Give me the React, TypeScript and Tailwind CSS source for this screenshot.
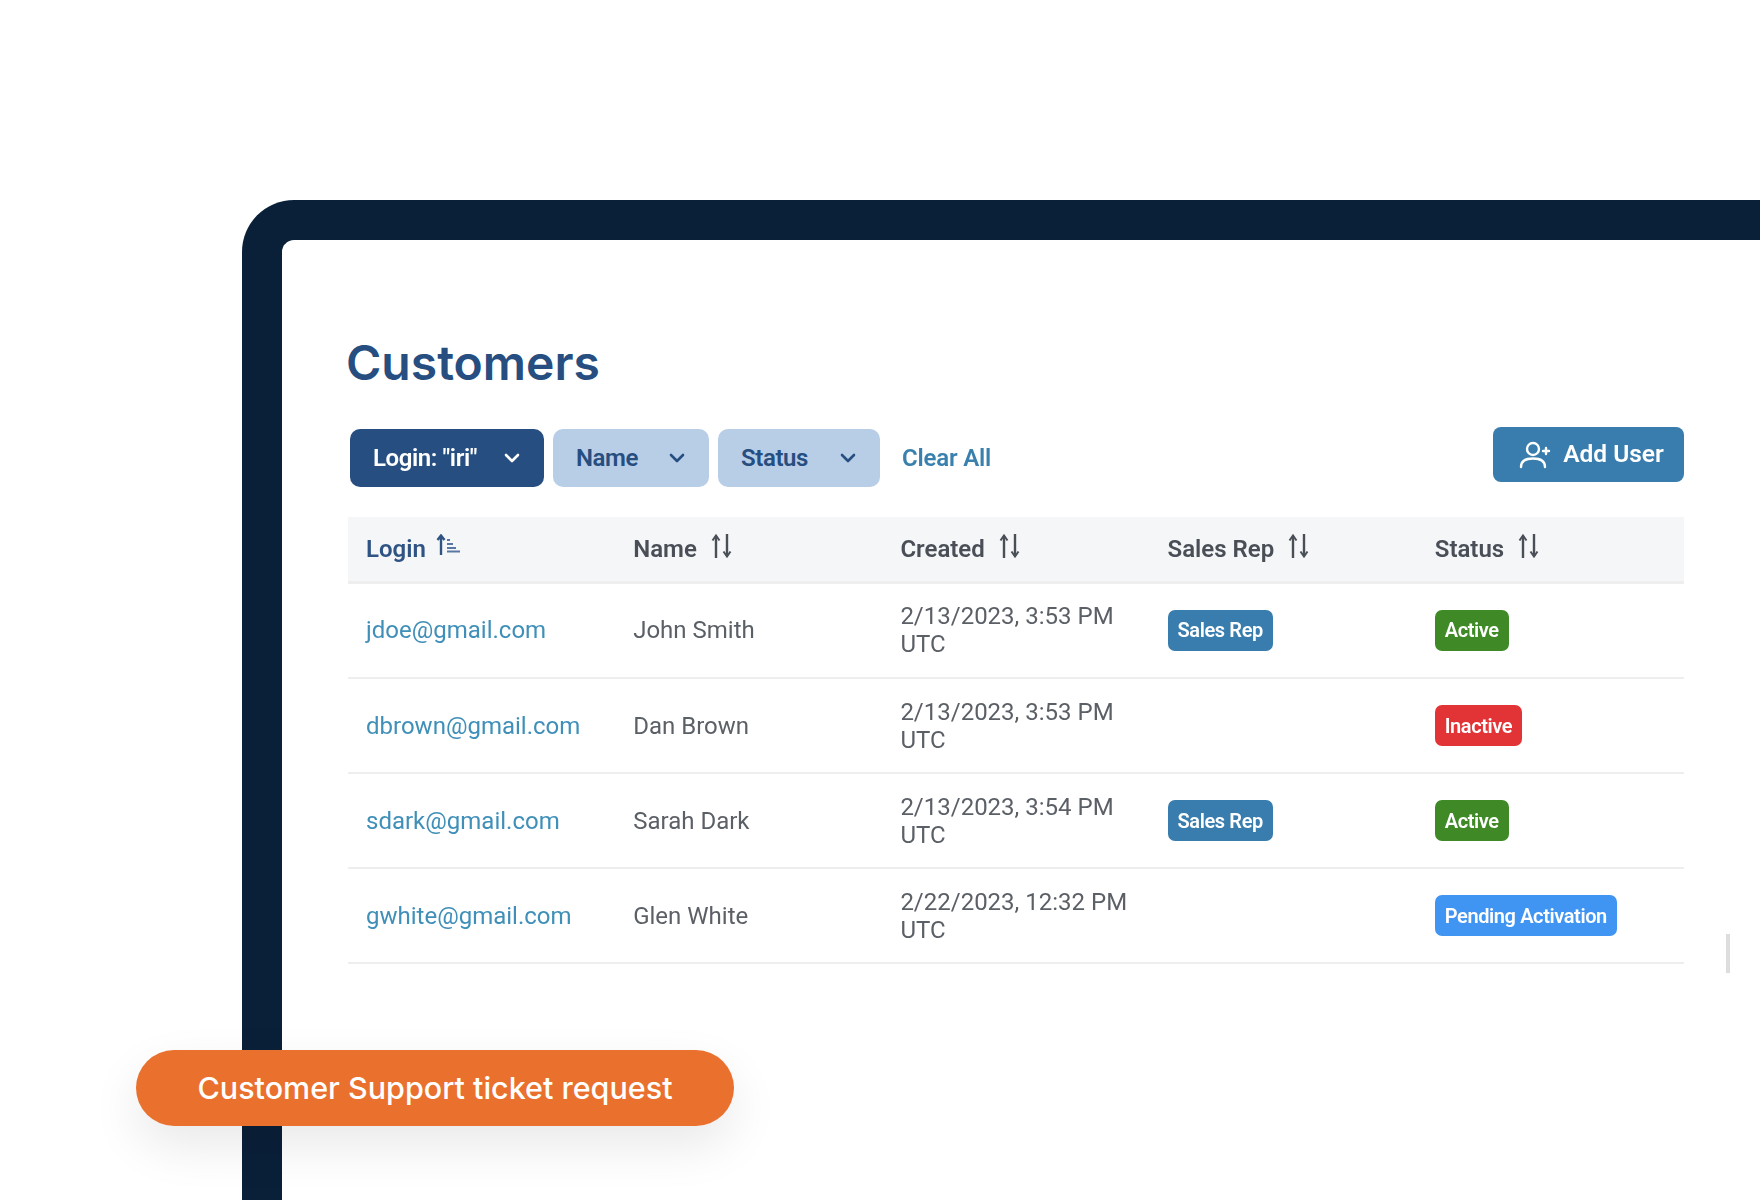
import { ChevronDown } from 'lucide-react'

const rows = [
  { login: 'jdoe@gmail.com', name: 'John Smith', date: '2/13/2023, 3:53 PM', rep: true, status: 'Active' },
  { login: 'dbrown@gmail.com', name: 'Dan Brown', date: '2/13/2023, 3:53 PM', rep: false, status: 'Inactive' },
  { login: 'sdark@gmail.com', name: 'Sarah Dark', date: '2/13/2023, 3:54 PM', rep: true, status: 'Active' },
  { login: 'gwhite@gmail.com', name: 'Glen White', date: '2/22/2023, 12:32 PM', rep: false, status: 'Pending Activation' },
]

const statusColors: Record<string, string> = {
  Active: 'bg-[#3f8a26]',
  Inactive: 'bg-[#e23436]',
  'Pending Activation': 'bg-[#4095f2]',
}

function SortIcon() {
  return (
    <svg width="24" height="24" viewBox="0 0 24 24" fill="none" stroke="#4a4f57" strokeWidth="2.4" className="ml-[12px] -mt-[5px]">
      <path d="M7 24V2" />
      <path d="M3.5 6.5L7 1.5L10.5 6.5" strokeWidth="2" />
      <path d="M18 0V22" />
      <path d="M14.5 17.5L18 22.5L21.5 17.5" strokeWidth="2" />
    </svg>
  )
}

function SortAscIcon() {
  return (
    <svg width="24" height="22" viewBox="0 0 24 22" fill="none" stroke="#2f5484" className="ml-[10px] -mt-[7px]">
      <path d="M5 21V2M1.5 6L5 1.5L8.5 6" strokeWidth="2.4" />
      <path d="M11 6H14M11 10H17M11 14H20M11 17.5H24" strokeWidth="2" stroke="#5878a3" />
    </svg>
  )
}

function AddUserIcon() {
  return (
    <svg width="32" height="28" viewBox="0 0 32 28" fill="none" stroke="white" strokeWidth="2.4" strokeLinecap="round">
      <circle cx="14" cy="8" r="6" />
      <path d="M2 26C2 20 7 17.5 14 17.5C21 17.5 26 20 26 26" />
      <path d="M27 7V13M24 10H30" />
    </svg>
  )
}

function FilterButton({ label, active, width }: { label: string; active?: boolean; width: string }) {
  return (
    <button
      className={`flex h-[58px] items-center justify-between rounded-[10px] pl-[23px] pr-[20px] text-[24px] font-semibold tracking-[-0.4px] ${width} ${
        active ? 'bg-[#264e80] text-white' : 'bg-[#b8cde6] text-[#264e80]'
      }`}
    >
      {label}
      <ChevronDown size={24} strokeWidth={2.6} />
    </button>
  )
}

function Badge({ label, color }: { label: string; color: string }) {
  return (
    <span className={`inline-flex h-[41px] items-center rounded-[7px] px-[10px] align-middle text-[20px] font-semibold tracking-[-0.4px] text-white ${color}`}>
      {label}
    </span>
  )
}

export default function App() {
  return (
    <div className="relative h-[1200px] w-[1760px] overflow-hidden bg-white font-['Roboto',sans-serif]">
      <div className="pl-[242px] pt-[200px]">
        <div className="h-[1000px] rounded-tl-[52px] border-l-[40px] border-t-[40px] border-[#0a2039] bg-white">
          <div className="h-full rounded-tl-[14px] pl-[65px] pt-[89px]">
            <h1 className="-ml-[1px] font-['Inter',sans-serif] text-[48px] font-semibold leading-[67px] text-[#264e80]">Customers</h1>

            <div className="blur-[0.6px]">
              <div className="mt-[31px] flex w-[1337px] items-start justify-between">
                <div className="mt-[2px] ml-[3px] flex items-center gap-[9px]">
                  <FilterButton label={'Login: "iri"'} active width="w-[194px]" />
                  <FilterButton label="Name" width="w-[156px]" />
                  <FilterButton label="Status" width="w-[162px]" />
                  <button className="ml-[13px] text-[24px] font-semibold tracking-[-0.2px] text-[#3a80ae]">Clear All</button>
                </div>
                <button className="flex h-[55px] w-[191px] items-center justify-center gap-[12px] rounded-[8px] bg-[#387dad] pl-[6px] text-[24.5px] font-semibold text-white">
                  <AddUserIcon />
                  Add User
                </button>
              </div>

              <table className="ml-[1px] mt-[30px] w-[1336px] table-fixed text-left">
                <thead>
                  <tr className="h-[65px] border-b-[3px] border-[#eeeeee] bg-[#f5f6f8] text-[24px] text-[#4a4f57]">
                    {['Login', 'Name', 'Created', 'Sales Rep', 'Status'].map((h, i) => (
                      <th key={h} className="px-[18px] font-semibold">
                        <span className={`flex items-center ${i === 0 ? 'text-[#2f5484]' : ''}`}>
                          {h}
                          {i === 0 ? <SortAscIcon /> : <SortIcon />}
                        </span>
                      </th>
                    ))}
                  </tr>
                </thead>
                <tbody>
                  {rows.map((r, i) => (
                    <tr
                      key={r.login}
                      className={`border-b-[2px] border-[#eeeeee] text-[24px] leading-[28px] text-[#5b5f66] ${i === 0 ? 'h-[96px]' : 'h-[95px]'}`}
                    >
                      <td className="px-[18px] text-[#3f8fb8]">{r.login}</td>
                      <td className="px-[18px]">{r.name}</td>
                      <td className="px-[18px]">
                        {r.date}
                        <br />
                        UTC
                      </td>
                      <td className="px-[18px]">{r.rep && <Badge label="Sales Rep" color="bg-[#387dad]" />}</td>
                      <td className="px-[18px]">
                        <Badge label={r.status} color={statusColors[r.status]} />
                      </td>
                    </tr>
                  ))}
                </tbody>
              </table>
            </div>
          </div>
        </div>
      </div>

      {/* scrollbar sliver */}
      <div className="absolute left-[1726px] top-[934px] h-[39px] w-[4px] bg-[#dddddd]" />

      <div className="absolute left-[136px] top-[1050px] flex h-[76px] w-[598px] items-center justify-center rounded-full bg-[#ea702e] font-['Inter',sans-serif] text-[30.5px] font-medium text-white shadow-[0_20px_50px_rgba(0,0,0,0.09)]">
        Customer Support ticket request
      </div>
    </div>
  )
}
